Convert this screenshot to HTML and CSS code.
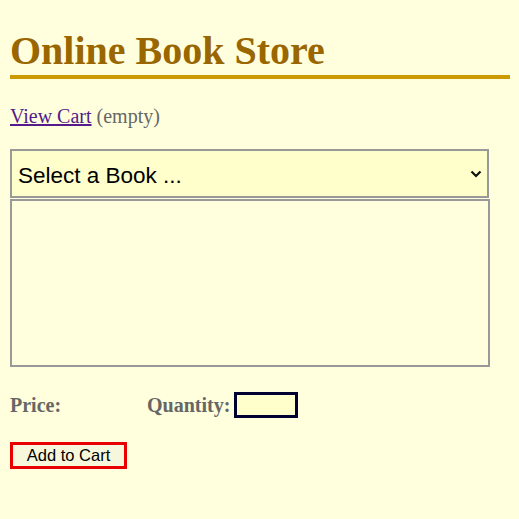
FILE: index.html
```html
<!DOCTYPE html>
<html>
<head>
<meta charset="utf-8">
<title>Online Book Store</title>
<link rel="stylesheet" href="styles.css">
</head>
<body>
<h1 class="title">Online Book Store</h1>
<p class="cart"><a href="#cart" class="cart-link">View Cart</a> <span class="cart-state">(empty)</span></p>
<form class="order">
  <div class="select-wrap">
    <select class="book-select">
      <option>Select a Book ...</option>
    </select>
    <svg class="chevron" width="12" height="8" viewBox="0 0 12 8"><path d="M1.5 1.5 L6 6 L10.5 1.5" fill="none" stroke="#111" stroke-width="2.2"/></svg>
  </div>
  <div class="details"></div>
  <div class="fields">
    <span class="label price-label">Price:</span>
    <span class="label">Quantity:</span>
    <input type="text" class="qty">
  </div>
  <button type="button" class="add">Add to Cart</button>
</form>
</body>
</html>
```
FILE: styles.css
```css
html, body {
  background: #ffffdd;
}
body {
  margin: 0;
  padding: 0 9px 0 10px;
  font-family: "Liberation Serif", "Times New Roman", serif;
  font-size: 20px;
}
.title {
  margin: 28px 0 0;
  font-size: 40px;
  line-height: 46px;
  font-weight: bold;
  color: #996600;
  border-bottom: 4px solid #cc9900;
  padding-bottom: 1px;
}
.cart {
  margin: 26px 0 0;
  line-height: 23px;
  color: #666666;
}
.cart-link {
  color: #551a8b;
}
.order {
  margin-top: 21px;
  display: flex;
  flex-direction: column;
  align-items: flex-start;
}
.select-wrap {
  position: relative;
  width: 479px;
  height: 49px;
}
.book-select {
  appearance: none;
  -webkit-appearance: none;
  width: 479px;
  height: 49px;
  margin: 0;
  border: 2px solid #999999;
  border-radius: 0;
  background-color: #ffffcc;
  font-family: "Liberation Sans", Arial, sans-serif;
  font-size: 22.5px;
  color: #000;
  padding: 3px 30px 0 6px;
  outline: none;
}
.chevron {
  position: absolute;
  left: 460px;
  top: 21px;
  pointer-events: none;
}
.details {
  width: 476px;
  height: 164px;
  margin-top: 1px;
  border: 2px solid #999999;
}
.fields {
  display: flex;
  align-items: center;
  margin-top: 25px;
  height: 26px;
}
.label {
  font-weight: bold;
  color: #666666;
  font-size: 20px;
}
.price-label {
  width: 137px;
}
.qty {
  width: 58px;
  height: 20px;
  margin: 0 0 0 4px;
  padding: 0;
  border: 3px solid #000033;
  background: #ffffcc;
  box-sizing: content-box;
}
.add {
  margin-top: 24px;
  width: 117px;
  height: 27px;
  padding: 0;
  border: 3px solid #e80000;
  border-radius: 0;
  background: #f7f7dc;
  font-family: "Liberation Sans", Arial, sans-serif;
  font-size: 16.5px;
  color: #000;
}
```
